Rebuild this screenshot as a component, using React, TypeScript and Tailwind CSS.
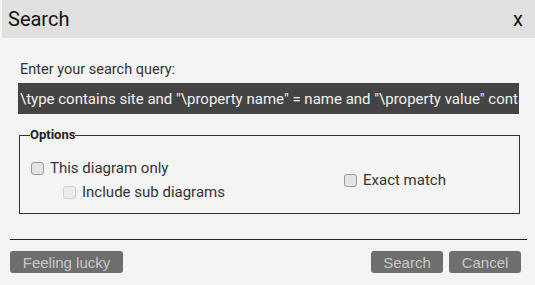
import React from 'react';

const Box: React.FC<{ faded?: boolean }> = ({ faded }) => (
  <span
    className={
      'inline-block w-[13px] h-[13px] rounded-[3px] border shrink-0 ' +
      (faded ? 'border-[#cfcfcf] bg-[#ececec]' : 'border-[#9a9a9a] bg-[#e4e4e4]')
    }
  />
);

export default function App() {
  const query =
    '\\type contains site and "\\property name" = name and "\\property value" contains value';

  return (
    <div className="w-[535px] h-[285px] bg-[#f4f4f4] font-['Roboto',sans-serif] text-[#222] overflow-hidden">
      <div className="ml-[2px] h-[38px] bg-[#e0e0e0] flex items-center justify-between pl-[6px] pr-[12px]">
        <span className="text-[20px] text-[#111]">Search</span>
        <span className="text-[20px] text-[#111] leading-none">x</span>
      </div>

      <div className="px-[18px] pt-[23px]">
        <div className="pl-[2px] text-[14.5px] text-[#333] leading-[18px]">Enter your search query:</div>
        <input
          readOnly
          value={query}
          className="block mt-[4px] w-[501px] h-[31px] bg-[#444] pl-[2px] text-[15px] text-[#f2f2f2] outline-none border-0"
        />

        <fieldset className="mt-[13px] ml-[1px] w-[501px] border border-[#333] px-[10px] pb-[11px]">
          <legend className="text-[13px] font-bold leading-[16px] text-[#222]">Options</legend>
          <div className="flex pt-[15px]">
            <div className="w-[313px] flex flex-col gap-[4px]">
              <label className="flex items-center gap-[6px] h-[20px] pl-[1px] text-[15px] text-[#333]">
                <Box />
                This diagram only
              </label>
              <label className="flex items-center gap-[6px] h-[20px] pl-[33px] text-[15px] text-[#333]">
                <Box faded />
                Include sub diagrams
              </label>
            </div>
            <div className="flex items-center">
              <label className="flex items-center gap-[6px] h-[20px] pl-[1px] text-[15px] text-[#333]">
                <Box />
                Exact match
              </label>
            </div>
          </div>
        </fieldset>
      </div>

      <div className="ml-[10px] mr-[8px] mt-[25px] border-t border-[#222]" />

      <div className="flex justify-between pl-[10px] pr-[14px] pt-[11px] font-['Liberation_Sans',sans-serif]">
        <button className="w-[113px] h-[22px] rounded-[3px] bg-[#6e6e6e] text-[#c8c8c8] text-[15px] leading-none">
          Feeling lucky
        </button>
        <div className="flex gap-[6px]">
          <button className="w-[72px] h-[22px] rounded-[3px] bg-[#6e6e6e] text-[#c8c8c8] text-[15px] leading-none">
            Search
          </button>
          <button className="w-[72px] h-[22px] rounded-[3px] bg-[#6e6e6e] text-[#c8c8c8] text-[15px] leading-none">
            Cancel
          </button>
        </div>
      </div>
    </div>
  );
}
